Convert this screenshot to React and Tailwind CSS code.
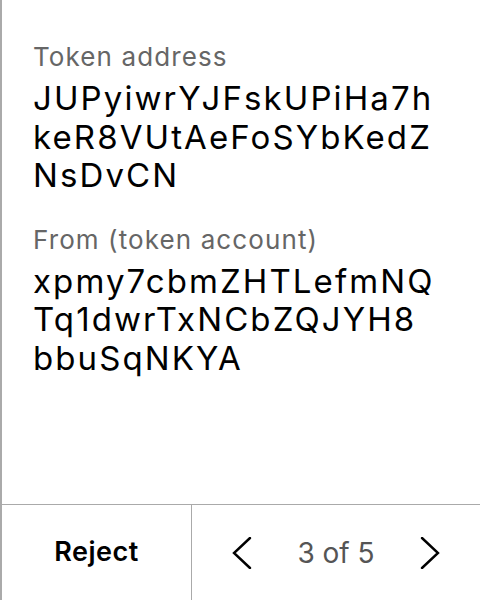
import React from "react";

const Field = ({ label, lines }) => (
  <div className="flex flex-col gap-[7px]">
    <span className="text-[26px] leading-[30px] tracking-[1.1px] text-[#666]">
      {label}
    </span>
    <div className="flex flex-col text-[33px] leading-[38.5px] tracking-[2.1px] text-black">
      {lines.map((line) => (
        <span key={line}>{line}</span>
      ))}
    </div>
  </div>
);

const Chevron = ({ dir }) => (
  <svg width="20" height="32" viewBox="0 0 20 32" fill="none">
    <path
      d={dir === "left" ? "M18 1 L2 16 L18 31" : "M2 1 L18 16 L2 31"}
      stroke="black"
      strokeWidth="2.4"
      strokeLinecap="round"
    />
  </svg>
);

export default function App() {
  return (
    <div
      className="flex h-[600px] w-[480px] flex-col border-l-2 border-[#aaa] bg-white"
      style={{ fontFamily: "Inter, 'Noto Sans', sans-serif" }}
    >
      <div className="flex flex-1 flex-col gap-[30px] px-[31px] pt-[42px]">
        <Field
          label="Token address"
          lines={["JUPyiwrYJFskUPiHa7h", "keR8VUtAeFoSYbKedZ", "NsDvCN"]}
        />
        <Field
          label="From (token account)"
          lines={["xpmy7cbmZHTLefmNQ", "Tq1dwrTxNCbZQJYH8", "bbuSqNKYA"]}
        />
      </div>
      <div className="flex h-[96px] border-t border-[#aaa]">
        <button className="flex w-[190px] items-center justify-center border-r border-[#aaa] text-[27px] font-semibold tracking-[0.5px] text-black">
          Reject
        </button>
        <div className="flex flex-1 items-center justify-between px-[40px]">
          <Chevron dir="left" />
          <span className="text-[28px] text-[#555]">3 of 5</span>
          <Chevron dir="right" />
        </div>
      </div>
    </div>
  );
}
